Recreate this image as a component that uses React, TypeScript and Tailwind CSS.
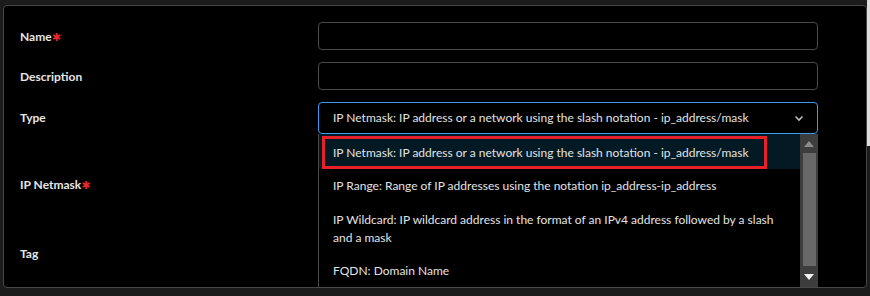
import React from 'react'

const options = [
    'IP Netmask: IP address or a network using the slash notation - ip_address/mask',
    'IP Range: Range of IP addresses using the notation ip_address-ip_address',
    'IP Wildcard: IP wildcard address in the format of an IPv4 address followed by a slash and a mask',
    'FQDN: Domain Name',
]

const Label = ({ text, required }: { text: string; required?: boolean }) => (
    <span className="flex items-center text-[12px] font-bold text-[#e6e6e6]">
        {text}
        {required && <span className="text-[#e8262d] text-[11px] leading-none" style={{ fontFamily: '"DejaVu Sans", sans-serif' }}>✱</span>}
    </span>
)

const App = () => {
    return (
        <div className="relative w-[870px] h-[296px] bg-[#1b1b1b] pt-[5px] overflow-hidden"
            style={{ fontFamily: 'Lato, "Open Sans", sans-serif' }}>
            <div className="absolute right-0 top-0 w-[3px] h-[146px] bg-[#dcdcdc]" />

            <div className="ml-[3px] w-[864px] h-[283px] bg-black border border-[#474747] rounded-[4px] pl-4 pt-[16px]">
                <div className="grid grid-cols-[298px_500px] items-center gap-y-[12px]">
                    <div className="pt-[2px]"><Label text="Name" required /></div>
                    <div className="h-[28px] rounded-[4px] border border-[#4a4a4a]" />

                    <div className="pt-[2px]"><Label text="Description" /></div>
                    <div className="h-[28px] rounded-[4px] border border-[#4a4a4a]" />

                    <Label text="Type" />
                    <div className="h-[32px] rounded-[4px] border border-[#3a9bf0] flex items-center justify-between pl-[14px] pr-[12px]">
                        <span className="text-[12px] text-[#e3e3e3]">{options[0]}</span>
                        <svg width="12" height="12" viewBox="0 0 12 12" fill="none">
                            <path d="M2.5 4.5 L6 8 L9.5 4.5" stroke="#bdbdbd" strokeWidth="1.6" />
                        </svg>
                    </div>

                    <div className="h-[78px] flex items-center">
                        <Label text="IP Netmask" required />
                    </div>
                    <div />

                    <div className="h-[36px] flex items-center">
                        <Label text="Tag" />
                    </div>
                    <div />
                </div>
            </div>

            {/* open dropdown */}
            <div className="absolute left-[318px] top-[134px] w-[500px] h-[154px] bg-black border-l border-b border-[#4a4a4a] flex">
                <div className="flex-1 flex flex-col text-[12px] text-[#e3e3e3]">
                    <div className="h-[35px] bg-[#031a24] pl-[3px] pt-[2px]">
                        <div className="w-[445px] h-[33px] border-[3px] border-[#e8202a] flex items-center pl-[8px] whitespace-nowrap">
                            {options[0]}
                        </div>
                    </div>
                    <div className="h-[34px] flex items-center pl-[14px]">{options[1]}</div>
                    <div className="h-[52px] flex items-center pl-[14px] pr-[20px] leading-[18px]">{options[2]}</div>
                    <div className="h-[33px] flex items-center pl-[14px]">{options[3]}</div>
                </div>
                <div className="w-[18px] bg-[#3d3d3d] flex flex-col items-center">
                    <div className="h-[19px] flex items-center justify-center">
                        <svg width="10" height="6" viewBox="0 0 10 6"><path d="M0 6 L5 0 L10 6 Z" fill="#8a8a8a" /></svg>
                    </div>
                    <div className="w-[13px] h-[113px] bg-[#686868]" />
                    <div className="flex-1 flex items-center justify-center">
                        <svg width="10" height="6" viewBox="0 0 10 6"><path d="M0 0 L10 0 L5 6 Z" fill="#f2f2f2" /></svg>
                    </div>
                </div>
            </div>
        </div>
    )
}

export default App
